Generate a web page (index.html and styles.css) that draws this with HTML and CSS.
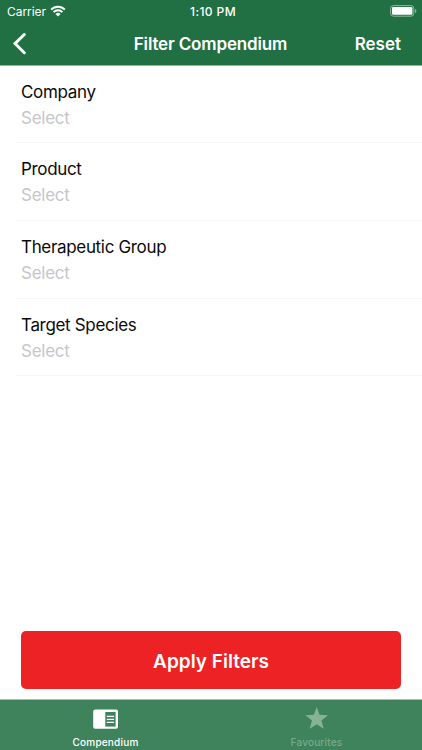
FILE: index.html
```html
<!DOCTYPE html>
<html lang="en">
<head>
    <meta charset="UTF-8">
    <meta name="viewport" content="width=device-width, initial-scale=1.0">
    <title>Filter Compendium</title>

    <link rel="stylesheet" href="styles.css">
</head>
<body>
    <header>
        <div class="status-bar">
            <div class="carrier">
                <span>Carrier</span>
                <svg class="wifi" viewBox="0 0 16 12" width="16" height="12">
                    <path d="M1.2 4.6 a9.6 9.6 0 0 1 13.6 0 M3.6 7.1 a6.2 6.2 0 0 1 8.8 0" fill="none" stroke="#fff" stroke-width="1.9"/>
                    <path d="M8 11.5 L5.5 9 a3.6 3.6 0 0 1 5 0 Z" fill="#fff"/>
                </svg>
            </div>
            <span class="time">1:10 PM</span>
            <svg class="battery" viewBox="0 0 27 12" width="27" height="12">
                <rect x="0.6" y="0.6" width="23.2" height="10.6" rx="2.8" fill="none" stroke="#90b7a0" stroke-width="1"/>
                <rect x="2" y="2" width="20.4" height="7.8" rx="1.3" fill="#fff"/>
                <path d="M25 4 q1.4 0.6 1.4 2 t-1.4 2 Z" fill="#90b7a0"/>
            </svg>
        </div>
        <nav class="nav-bar">
            <button class="back" aria-label="Back">
                <svg viewBox="0 0 15 22" width="15" height="22">
                    <path d="M12.3 1.5 L3 10.6 L12.3 19.7" fill="none" stroke="#fff" stroke-width="2.9" stroke-linecap="round"/>
                </svg>
            </button>
            <h1>Filter Compendium</h1>
            <button class="reset">Reset</button>
        </nav>
    </header>

    <main>
        <ul class="filters">
            <li><span class="label">Company</span><span class="value">Select</span></li>
            <li><span class="label">Product</span><span class="value">Select</span></li>
            <li><span class="label">Therapeutic Group</span><span class="value">Select</span></li>
            <li><span class="label">Target Species</span><span class="value">Select</span></li>
        </ul>
        <button class="apply">Apply Filters</button>
    </main>

    <footer class="tab-bar">
        <a class="tab active">
            <svg viewBox="0 0 26 24" width="26" height="24">
                <rect x="0.2" y="2.6" width="24.8" height="19.2" rx="2" fill="#fff"/>
                <rect x="12.3" y="5" width="10.3" height="14.6" fill="#3f835d"/>
                <path d="M13.8 9.4 h7.3 M13.8 12.4 h7.3 M13.8 15.4 h7.3" stroke="#fff" stroke-width="1.4"/>
            </svg>
            <span>Compendium</span>
        </a>
        <a class="tab">
            <svg viewBox="0 0 26 24" width="26" height="24">
                <path d="M12.7 0 L15.5 7.8 L24 8.3 L17.4 13.5 L19.7 21.8 L12.7 17.2 L5.7 21.8 L8 13.5 L1.4 8.3 L9.9 7.8 Z" fill="#86b493"/>
            </svg>
            <span>Favourites</span>
        </a>
    </footer>
</body>
</html>
```
FILE: styles.css
```css
* {
    box-sizing: border-box;
}

body {
    margin: 0;
    height: 100vh;
    display: flex;
    flex-direction: column;
    font-family: Inter, "Liberation Sans", sans-serif;
    background: #fff;
    color: #0a0a0a;
    overflow: hidden;
}

button {
    padding: 0;
    border: none;
    background: none;
    color: #fff;
    font-family: inherit;
    cursor: pointer;
}

svg {
    display: block;
}

/* Status and navigation bars */
header {
    height: 65.6px;
    background: #217044;
    border-bottom: 1px solid #90b7a0;
    color: #fff;
}

.status-bar {
    height: 22px;
    padding: 0 5px 0 7px;
    display: grid;
    grid-template-columns: 1fr auto 1fr;
    align-items: center;
    font-size: 12px;
}

.carrier {
    display: flex;
    align-items: center;
    gap: 4px;
    letter-spacing: -0.05px;
}

.wifi {
    margin-top: -1px;
}

.time {
    margin: 0 -1px 0 1px;
    font-weight: 500;
    font-size: 12px;
    letter-spacing: 0.4px;
}

.battery {
    justify-self: end;
    margin-top: -1px;
}

.nav-bar {
    height: 43px;
    padding: 0 21px 0 12px;
    display: grid;
    grid-template-columns: 1fr auto 1fr;
    column-gap: 4px;
    align-items: center;
}

.back {
    justify-self: start;
}

h1 {
    margin: 0 -4px 0 4px;
    font-size: 17px;
    font-weight: 600;
    letter-spacing: -0.15px;
}

.reset {
    justify-self: end;
    font-size: 17px;
    font-weight: 600;
}

/* Filter rows */
main {
    flex: 1;
    display: flex;
    flex-direction: column;
    justify-content: space-between;
}

.filters {
    margin: 0 0 0 16px;
    padding: 0;
    list-style: none;
}

.filters li {
    height: 77.7px;
    padding: 13px 0 0 5px;
    border-bottom: 1px solid #f6f6f6;
    font-size: 17px;
    line-height: 26px;
}

.label,
.value {
    display: block;
    letter-spacing: -0.33px;
}

.value {
    color: #c6c6ca;
    letter-spacing: -0.25px;
}

.apply {
    height: 58px;
    margin: 0 21px 10px;
    padding-top: 2px;
    border-radius: 5px;
    background: #ed2224;
    font-size: 19px;
    font-weight: 600;
}

/* Bottom tabs */
.tab-bar {
    height: 51px;
    display: flex;
    background: #3f835d;
    border-top: 1px solid #a9bfb2;
}

.tab {
    flex: 1;
    padding-top: 7px;
    display: flex;
    flex-direction: column;
    align-items: center;
    gap: 5px;
    color: #78aa88;
    font-size: 10px;
    font-weight: 500;
    line-height: 13px;
    letter-spacing: 0.2px;
}

.active {
    color: #fff;
}
```
